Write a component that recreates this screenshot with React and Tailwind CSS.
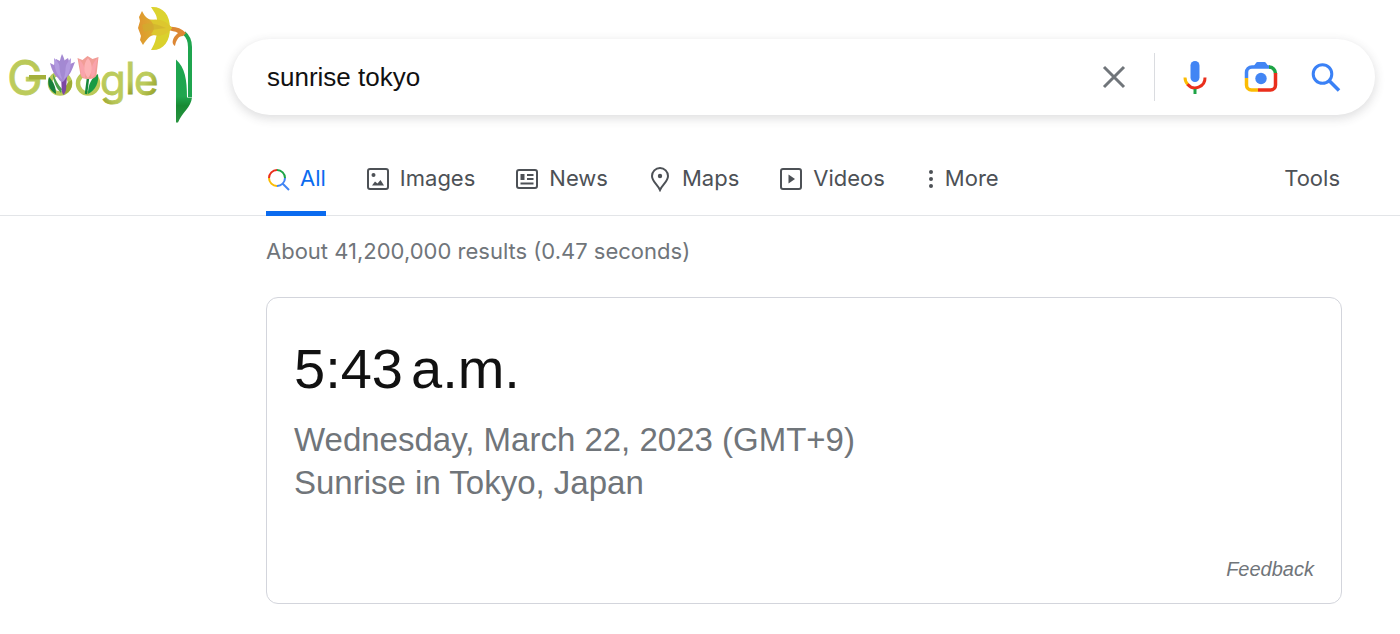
const tabs = [
  { label: 'Images', icon: ImagesIcon },
  { label: 'News', icon: NewsIcon },
  { label: 'Maps', icon: MapsIcon },
  { label: 'Videos', icon: VideosIcon },
];

/**
 * Doodle - spring flowers version of the logo
 */
function Doodle() {
  return (
    <svg viewBox="0 0 204 130" className="block h-[130px] w-[204px]" role="img" aria-label="Google">
      <defs>
        <linearGradient id="stem" gradientUnits="userSpaceOnUse" x1="0" y1="32" x2="0" y2="124">
          <stop offset="0" stopColor="#1ca451" />
          <stop offset="0.7" stopColor="#20a64e" />
          <stop offset="0.8" stopColor="#178a33" />
          <stop offset="1" stopColor="#2a9440" />
        </linearGradient>
        <linearGradient id="tall" gradientUnits="userSpaceOnUse" x1="0" y1="60" x2="0" y2="95">
          <stop offset="0" stopColor="#bdcb62" />
          <stop offset="0.6" stopColor="#bccb5c" />
          <stop offset="1" stopColor="#97a32c" />
        </linearGradient>
        <linearGradient id="capital" gradientUnits="userSpaceOnUse" x1="24" y1="80" x2="45" y2="58">
          <stop offset="0" stopColor="#bccb5c" />
          <stop offset="0.7" stopColor="#b9c757" />
          <stop offset="1" stopColor="#97a32c" />
        </linearGradient>
        <linearGradient id="tail" gradientUnits="userSpaceOnUse" x1="101" y1="104" x2="114" y2="93">
          <stop offset="0" stopColor="#8f9b20" />
          <stop offset="0.6" stopColor="#b4c254" />
          <stop offset="1" stopColor="#bccb5c" />
        </linearGradient>
        <linearGradient id="round" gradientUnits="userSpaceOnUse" x1="146" y1="80" x2="158" y2="86">
          <stop offset="0" stopColor="#bccb5c" />
          <stop offset="1" stopColor="#9aa62d" />
        </linearGradient>
        <linearGradient id="trumpet" x1="0" y1="0" x2="1" y2="0">
          <stop offset="0" stopColor="#e0962f" />
          <stop offset="0.4" stopColor="#dca92f" />
          <stop offset="1" stopColor="#ddc92f" />
        </linearGradient>
      </defs>

      {/* Letters */}
      <g fontFamily="Inter, sans-serif" fontWeight="400">
        <text x="7" y="95" fontSize="48" fill="url(#capital)" stroke="url(#capital)" strokeWidth="0.8">G</text>
        <text x="100" y="95" fontSize="42" fill="url(#tail)" stroke="url(#tail)" strokeWidth="0.8">g</text>
        <text x="125" y="94" fontSize="44" fill="url(#tall)" stroke="url(#tall)" strokeWidth="0.8">l</text>
        <text x="134" y="95" fontSize="42" fill="url(#round)" stroke="url(#round)" strokeWidth="0.8">e</text>
      </g>

      {/* Crocus */}
      <circle cx="60" cy="83.500" r="10" fill="none" stroke="#bac958" strokeWidth="4.500" />
      <path d="M49 77c-2 7 0 13 7 17 0-6-2-12-7-17z" fill="#17803a" />
      <path d="M53 74c0 7 3 14 8 19l1-4c-4-4-6-9-9-15z" fill="#4aa04c" />
      <path d="M72 80c-5 2-8 7-7 14 5-2 8-7 7-14z" fill="#9dab35" />
      <path d="M61 76h6l-1 14-2 5c-3-2-2-6-3-19z" fill="#7d47a3" />
      <path d="M50 63l4 2 2-6 6 3 6-4 2 6 5-2c-3 8-5 13-9 16-2 3-3 4-4 4s-3-2-4-4c-4-3-6-8-8-15z" fill="#a688d2" />
      <path d="M54 58c5 4 8 11 9 22-7-5-9-13-9-22zM71 58c-5 5-7 12-8 22 7-5 8-13 8-22z" fill="#b39be0" />
      <path d="M62 54c4 7 5 17 1 27-4-9-5-18-1-27z" fill="#a389d2" />

      {/* Tulip */}
      <circle cx="88" cy="83.500" r="10" fill="none" stroke="#bac958" strokeWidth="4.500" />
      <path d="M98 74c1 8-2 16-10 20 0-9 3-16 10-20z" fill="#179a44" />
      <path d="M88 78l-2 16" fill="none" stroke="#15863a" strokeWidth="2.500" />
      <path d="M77.500 58l5 2 5-4 5 3 6-2-2 18c-1 3-4 4-8 4-5 0-7-1-8-4z" fill="#f19d96" />
      <path d="M79 59c5 5 7 11 6 19-1 0-3-1-4-3zM97.500 58c-6 6-7 12-6 20l3-3z" fill="#f9a3ab" />
      <path d="M88 58c5 6 5 14 0 20-5-6-5-14 0-20z" fill="#fdb3b6" />

      <path d="M29 75h17v4.500H29z" fill="#a4b03c" />

      {/* Daffodil */}
      <path d="M184 33c5 4 6 8 6 14v50" fill="none" stroke="#1fa54f" strokeWidth="4" />
      <path d="M176 59.500c9 8 11 20 11 38h5c-1 10-10 15-14 25h-2z" fill="url(#stem)" />
      <path d="M168 27c7-1 13 1 18 6l-3 3c-5 0-7 5-8 10-4-2-3-8 3-13-3-2-7-2-10-3z" fill="#dc8734" />
      <path d="M151 7c11-1 19 7 19 21-8 0-12-4-13-8 0-5-3-8-6-13z" fill="#dcd32f" />
      <path d="M151 50c12 1 19-8 19-22-9 0-13 4-14 10-1 5-3 8-5 12z" fill="#dad12c" />
      <path d="M142 11c3 6 6 9 12 9 7 0 14 3 18 8-5 6-11 8-17 7-5 0-8 4-12 10l-3-5 1-4-3-8 2-7-1-4z" fill="url(#trumpet)" />
      <path d="M150 20c9-2 17 1 22 8-6 8-13 9-21 6 4-4 4-9-1-14z" fill="#ddc72e" />
      <path d="M142 25c7-3 15-1 24 3-9 1-16 2-22 4z" fill="#cfae2e" opacity="0.6" />
    </svg>
  );
}

function MicIcon() {
  return (
    <svg viewBox="0 0 24 34" className="h-[34px] w-6" fill="none" aria-hidden="true">
      <rect x="7.500" y="1" width="9" height="21" rx="4.500" fill="#4285f4" />
      <path d="M2 17.500c0 3 1.200 5.600 3.300 7.500" stroke="#fbbc04" strokeWidth="3" />
      <path d="M4.500 24.200A9.900 9.900 0 0 0 22 17.500" stroke="#ea2f1c" strokeWidth="3" />
      <path d="M12 29V34" stroke="#1ea446" strokeWidth="3" />
    </svg>
  );
}

function LensIcon() {
  return (
    <svg viewBox="-4 0 38 32" className="h-8 w-[38px]" fill="none" aria-hidden="true">
      <path d="M2.500 17v-5.500a5.500 5.500 0 0 1 5.500-5.500h18" stroke="#4285f4" strokeWidth="3.500" />
      <path d="M9 6l3-4Q12.500 1 13.500 1h7q1 0 1.500 1L25 6z" fill="#4285f4" />
      <path d="M25 6a6.500 6.500 0 0 1 6.500 6.500" stroke="#1ea446" strokeWidth="3.500" />
      <path d="M31.500 12v12a5 5 0 0 1-5 5H14" stroke="#ea2f1c" strokeWidth="3.500" />
      <path d="M2.500 17v7a5 5 0 0 0 5 5H14" stroke="#fbbc04" strokeWidth="3.500" />
      <circle cx="17" cy="17.500" r="5.700" fill="#4285f4" />
    </svg>
  );
}

function SearchIcon() {
  return (
    <svg viewBox="0 0 30 30" className="size-[30px]" fill="none" stroke="#3a81f6" strokeWidth="3" aria-hidden="true">
      <circle cx="11.500" cy="12" r="9.300" />
      <path d="M18.500 19l9.500 9.500" strokeWidth="3.500" />
    </svg>
  );
}

function ClearIcon() {
  return (
    <svg viewBox="0 0 24 24" className="size-6" fill="none" stroke="#70757a" strokeWidth="3" aria-hidden="true">
      <path d="M2 2l20 20M22 2L2 22" />
    </svg>
  );
}

function AllIcon() {
  return (
    <svg viewBox="0 0 24 24" className="size-6" fill="none" strokeWidth="2" aria-hidden="true">
      <path d="M3 11a8 8 0 0 1 8-8" stroke="#ea2f1c" />
      <path d="M11 3a8 8 0 0 1 8 8" stroke="#1ea446" />
      <path d="M11 19a8 8 0 0 1-8-8" stroke="#fbbc04" />
      <path d="M19 11a8 8 0 0 1-8 8M16.500 16.500l6.500 6.500" stroke="#4285f4" />
    </svg>
  );
}

function ImagesIcon() {
  return (
    <svg viewBox="0 0 24 24" className="size-6" fill="none" aria-hidden="true">
      <rect x="2" y="2" width="20" height="20" rx="2" stroke="currentColor" strokeWidth="2" />
      <circle cx="7.500" cy="8" r="2" fill="currentColor" />
      <path d="M6 18.500l3-4 2.500 2 3-3.500 3.500 5.500z" fill="currentColor" />
    </svg>
  );
}

function NewsIcon() {
  return (
    <svg viewBox="0 0 24 24" className="size-6" fill="none" stroke="currentColor" strokeWidth="2" aria-hidden="true">
      <rect x="2" y="3" width="20" height="18" rx="2" />
      <path d="M5.500 7h4v6h-4z" fill="currentColor" stroke="none" />
      <path d="M12 8h6.500M12 12h6.500M5.500 16.500h13" />
    </svg>
  );
}

function MapsIcon() {
  return (
    <svg viewBox="0 0 24 26" className="h-[26px] w-6" fill="none" aria-hidden="true">
      <path d="M12 2a8 8 0 0 0-8 8c0 5.500 5 7.500 8 14 3-6.500 8-8.500 8-14a8 8 0 0 0-8-8z" stroke="currentColor" strokeWidth="2" />
      <circle cx="12" cy="10" r="2.200" fill="currentColor" />
    </svg>
  );
}

function VideosIcon() {
  return (
    <svg viewBox="0 0 24 24" className="size-6" fill="none" aria-hidden="true">
      <rect x="2" y="2" width="20" height="20" rx="2" stroke="currentColor" strokeWidth="2" />
      <path d="M9.500 7.500v9l6.500-4.500z" fill="currentColor" />
    </svg>
  );
}

function MoreIcon() {
  return (
    <svg viewBox="0 0 12 20" className="h-5 w-3" fill="currentColor" aria-hidden="true">
      <circle cx="6" cy="3" r="2" />
      <circle cx="6" cy="10" r="2" />
      <circle cx="6" cy="17" r="2" />
    </svg>
  );
}

const SearchBar = () => (
  <form
    role="search"
    onSubmit={(e) => e.preventDefault()}
    className="mt-[39px] flex h-[76px] flex-1 items-center rounded-full bg-white pl-[35px] pr-[34px] shadow-[0_3px_10px_1px_rgba(64,60,67,0.16)]"
  >
    <input
      type="text"
      aria-label="Search"
      defaultValue="sunrise tokyo"
      className="min-w-0 flex-1 bg-transparent text-[26px] text-[#111] outline-none"
    />
    <button type="button" aria-label="Clear" className="mr-7"><ClearIcon /></button>
    <div className="mr-7 h-12 w-px bg-[#dadce0]" />
    <div className="flex items-center gap-[33px]">
      <button type="button" aria-label="Search by voice"><MicIcon /></button>
      <button type="button" aria-label="Search by image"><LensIcon /></button>
      <button type="submit" aria-label="Search"><SearchIcon /></button>
    </div>
  </form>
);

const tabClass = 'flex items-center gap-[10px] border-b-[5px] border-transparent pt-1.5';

const TabBar = () => (
  <nav className="flex h-[76px] items-stretch border-b border-[#e3e5e8] pl-[266px] pr-[60px] font-[Inter,sans-serif] text-[22px] text-[#4d5156]">
    <div className="-mb-px flex flex-1 gap-10">
      <a href="#all" aria-current="page" className="flex items-center gap-[10px] border-b-[5px] border-[#0b6bef] pt-1.5 text-[#0b6bef]">
        <AllIcon />
        All
      </a>
      {tabs.map(({ label, icon: Icon }) => (
        <a key={label} href={`#${label.toLowerCase()}`} className={tabClass}>
          <Icon />
          {label}
        </a>
      ))}
      <button type="button" className="flex items-center gap-2 border-b-[5px] border-transparent pt-1.5">
        <MoreIcon />
        More
      </button>
    </div>
    <button type="button" className={tabClass}>Tools</button>
  </nav>
);

const AnswerCard = () => (
  <section className="rounded-xl border border-[#d3d5dc] px-[27px] pt-[39px] pb-5">
    <h1 className="text-[56px] leading-[64px] text-[#111]">
      5:43<span className="ml-2">a.m.</span>
    </h1>
    <p className="mt-[17px] text-[33px] leading-[43px] text-[#70757a]">
      Wednesday, March 22, 2023 (GMT+9)
      <br />
      Sunrise in Tokyo, Japan
    </p>
    <div className="mt-[51px] flex justify-end">
      <a href="#feedback" className="text-[20px] leading-7 text-[#70757a] italic">Feedback</a>
    </div>
  </section>
);

export default function App() {
  return (
    <div className="min-h-screen bg-white font-['Liberation_Sans',Arial,sans-serif]">
      <header className="flex items-start gap-7 pr-[25px]">
        <a href="#home" className="shrink-0"><Doodle /></a>
        <SearchBar />
      </header>
      <div className="mt-[10px]">
        <TabBar />
      </div>
      <main className="pl-[266px] pr-[58px] pt-[19px]">
        <p className="mb-[30px] font-[Inter,sans-serif] text-[22px] leading-8 text-[#70757a]">
          About 41,200,000 results (0.47 seconds)
        </p>
        <AnswerCard />
      </main>
    </div>
  );
}
